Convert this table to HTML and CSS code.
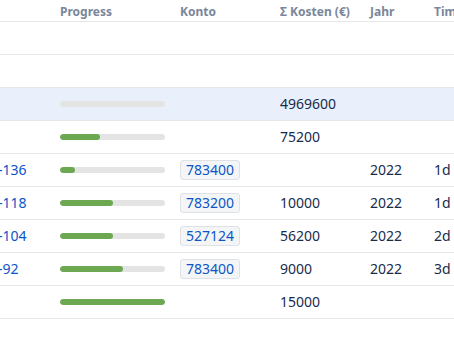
FILE: index.html
```html
<!DOCTYPE html>
<html lang="de">
<head>
<meta charset="utf-8">
<title>Tabelle</title>
<link rel="stylesheet" href="styles.css">
</head>
<body>
<div class="viewport">
  <div class="table">
    <div class="row head">
      <div class="cell"></div>
      <div class="cell">Progress</div>
      <div class="cell">Konto</div>
      <div class="cell">Σ Kosten (€)</div>
      <div class="cell">Jahr</div>
      <div class="cell">Time</div>
    </div>
    <div class="row">
      <div class="cell"></div><div class="cell"></div><div class="cell"></div><div class="cell"></div><div class="cell"></div><div class="cell"></div>
    </div>
    <div class="row">
      <div class="cell"></div><div class="cell"></div><div class="cell"></div><div class="cell"></div><div class="cell"></div><div class="cell"></div>
    </div>
    <div class="row selected">
      <div class="cell"></div>
      <div class="cell"><div class="bar"><div class="fill" style="width:0%"></div></div></div>
      <div class="cell"></div>
      <div class="cell">4969600</div>
      <div class="cell"></div>
      <div class="cell"></div>
    </div>
    <div class="row">
      <div class="cell"></div>
      <div class="cell"><div class="bar"><div class="fill" style="width:38%"></div></div></div>
      <div class="cell"></div>
      <div class="cell">75200</div>
      <div class="cell"></div>
      <div class="cell"></div>
    </div>
    <div class="row">
      <div class="cell"><a class="key" href="#">-136</a></div>
      <div class="cell"><div class="bar"><div class="fill" style="width:14%"></div></div></div>
      <div class="cell"><span class="badge">783400</span></div>
      <div class="cell"></div>
      <div class="cell">2022</div>
      <div class="cell">1d</div>
    </div>
    <div class="row">
      <div class="cell"><a class="key" href="#">-118</a></div>
      <div class="cell"><div class="bar"><div class="fill" style="width:50%"></div></div></div>
      <div class="cell"><span class="badge">783200</span></div>
      <div class="cell">10000</div>
      <div class="cell">2022</div>
      <div class="cell">1d</div>
    </div>
    <div class="row">
      <div class="cell"><a class="key" href="#">-104</a></div>
      <div class="cell"><div class="bar"><div class="fill" style="width:50%"></div></div></div>
      <div class="cell"><span class="badge">527124</span></div>
      <div class="cell">56200</div>
      <div class="cell">2022</div>
      <div class="cell">2d</div>
    </div>
    <div class="row">
      <div class="cell"><a class="key" href="#">-92</a></div>
      <div class="cell"><div class="bar"><div class="fill" style="width:60%"></div></div></div>
      <div class="cell"><span class="badge">783400</span></div>
      <div class="cell">9000</div>
      <div class="cell">2022</div>
      <div class="cell">3d</div>
    </div>
    <div class="row">
      <div class="cell"></div>
      <div class="cell"><div class="bar"><div class="fill" style="width:100%"></div></div></div>
      <div class="cell"></div>
      <div class="cell">15000</div>
      <div class="cell"></div>
      <div class="cell"></div>
    </div>
  </div>
</div>
</body>
</html>
```

FILE: styles.css
```css
html, body {
  margin: 0;
  padding: 0;
  background: #ffffff;
  overflow: hidden;
}

.viewport {
  width: 454px;
  height: 339px;
  overflow: hidden;
}

.table {
  width: 520px;
  font-family: "Noto Sans", "DejaVu Sans", sans-serif;
  font-size: 14px;
  color: #172b4d;
}

.row {
  display: grid;
  grid-template-columns: 60px 120px 100px 90px 64px 1fr;
  height: 32px;
  border-bottom: 1px solid #e6e7ea;
  align-items: center;
}

.row.head {
  height: 19px;
  padding-top: 2px;
  font-size: 12px;
  font-weight: 700;
  color: #7a869a;
}

.row.selected {
  background: #e9f0fb;
}

.cell {
  white-space: nowrap;
  line-height: 18px;
}

.key {
  display: inline-block;
  margin-left: -2px;
  color: #0b55c8;
  text-decoration: none;
}

.bar {
  width: 105px;
  height: 6px;
  border-radius: 3px;
  background: #e4e4e4;
  overflow: hidden;
}

.fill {
  height: 100%;
  background: #6ba851;
  border-radius: 3px;
}

.badge {
  display: inline-block;
  padding: 0 5px;
  line-height: 18px;
  border: 1px solid #dfe1e6;
  border-radius: 3px;
  background: #f4f5f7;
  color: #0b55c8;
}
```
